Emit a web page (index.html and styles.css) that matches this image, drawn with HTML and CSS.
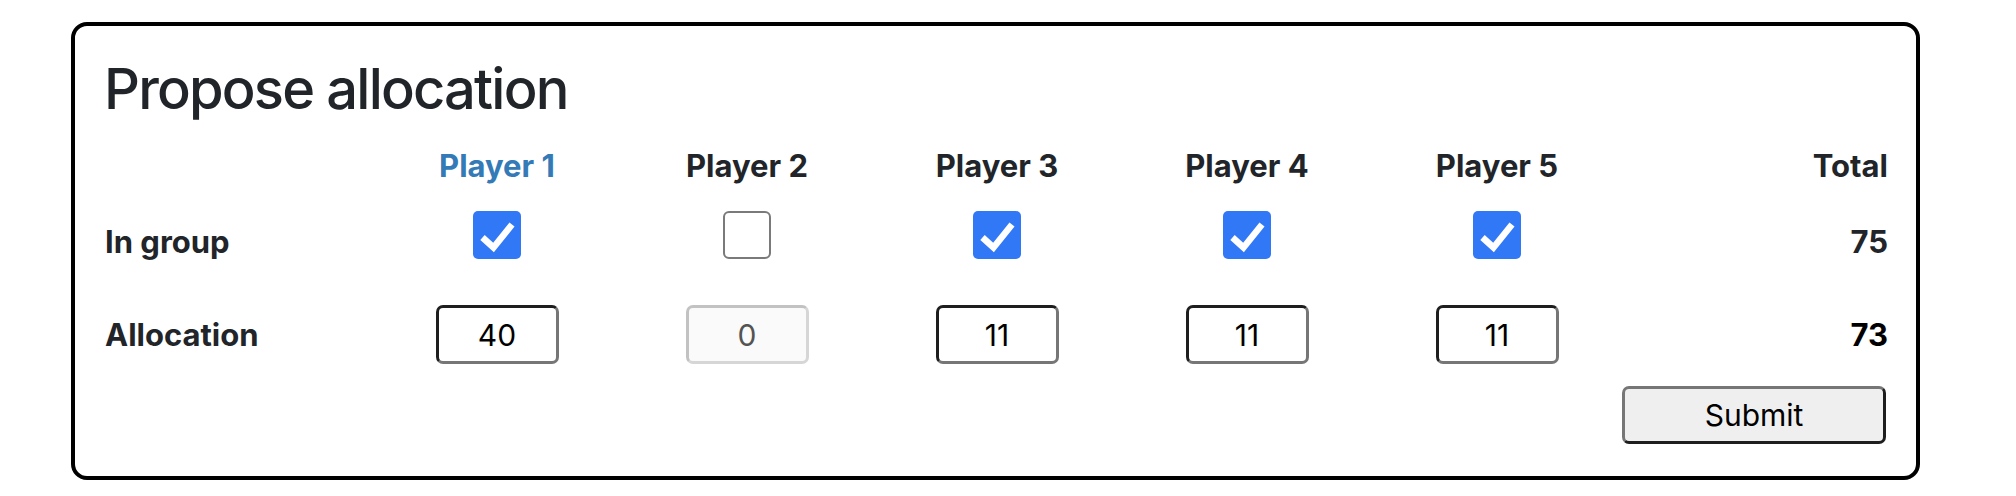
FILE: index.html
```html
<!DOCTYPE html>
<html lang="en">
<head>
<meta charset="utf-8">
<title>Propose allocation</title>
<link rel="stylesheet" href="styles.css">
</head>
<body>
<div class="card">
  <h1 class="title">Propose allocation</h1>

  <div class="grid row-head">
    <div class="label"></div>
    <div class="cell head active">Player 1</div>
    <div class="cell head">Player 2</div>
    <div class="cell head">Player 3</div>
    <div class="cell head">Player 4</div>
    <div class="cell head">Player 5</div>
    <div class="total">Total</div>
  </div>

  <div class="grid row-group">
    <div class="label">In group</div>
    <div class="cell"><span class="check on"><svg viewBox="0 0 48 48" width="48" height="48"><polyline points="9.5,26.5 20.5,36.5 39,13.5" fill="none" stroke="#fff" stroke-width="6.5"/></svg></span></div>
    <div class="cell"><span class="check off"></span></div>
    <div class="cell"><span class="check on"><svg viewBox="0 0 48 48" width="48" height="48"><polyline points="9.5,26.5 20.5,36.5 39,13.5" fill="none" stroke="#fff" stroke-width="6.5"/></svg></span></div>
    <div class="cell"><span class="check on"><svg viewBox="0 0 48 48" width="48" height="48"><polyline points="9.5,26.5 20.5,36.5 39,13.5" fill="none" stroke="#fff" stroke-width="6.5"/></svg></span></div>
    <div class="cell"><span class="check on"><svg viewBox="0 0 48 48" width="48" height="48"><polyline points="9.5,26.5 20.5,36.5 39,13.5" fill="none" stroke="#fff" stroke-width="6.5"/></svg></span></div>
    <div class="total">75</div>
  </div>

  <div class="grid row-alloc">
    <div class="label">Allocation</div>
    <div class="cell"><input class="amount" type="text" value="40"></div>
    <div class="cell"><input class="amount" type="text" value="0" disabled></div>
    <div class="cell"><input class="amount" type="text" value="11"></div>
    <div class="cell"><input class="amount" type="text" value="11"></div>
    <div class="cell"><input class="amount" type="text" value="11"></div>
    <div class="total strong">73</div>
  </div>

  <div class="grid row-submit">
    <div class="spacer"></div>
    <button class="submit" type="button">Submit</button>
  </div>
</div>
</body>
</html>
```

FILE: styles.css
```css
* { box-sizing: border-box; }

body {
  margin: 0;
  background: #fff;
  font-family: Inter, "Noto Sans", sans-serif;
  color: #212529;
}

.card {
  margin: 22px 0 0 71px;
  width: 1849px;
  border: 4px solid #000;
  border-radius: 16px;
  padding: 30px 30px 32px 30px;
}

.title {
  margin: 0 0 0 -1px;
  font-size: 56px;
  line-height: 66px;
  font-weight: 500;
  letter-spacing: -1.8px;
  color: #212529;
}

.grid {
  display: grid;
  grid-template-columns: 1fr repeat(5, 250px) 264px;
  align-items: center;
}

.row-head { height: 44px; margin-top: 22px; }
.row-group { height: 48px; margin-top: 21px; }
.row-alloc { height: 59px; margin-top: 48px; }
.row-submit { height: 58px; margin-top: 22px; grid-template-columns: 1fr 264px; }

.label {
  font-size: 31px;
  font-weight: 700;
  line-height: 38px;
}

.row-group .label,
.row-group .total {
  margin-top: 14px;
}

.cell {
  display: flex;
  justify-content: center;
  align-items: center;
}

.head {
  font-size: 31px;
  font-weight: 700;
  line-height: 38px;
}

.head.active { color: #337ab7; }

.total {
  text-align: right;
  font-size: 31px;
  font-weight: 700;
  line-height: 38px;
  margin-right: -2px;
}

.total.strong { color: #000; }

.check {
  display: block;
  width: 48px;
  height: 48px;
  border-radius: 5px;
}

.check svg { display: block; }

.check.on { background: #3178f6; }

.check.off {
  background: #fff;
  border: 2px solid #7a7a7a;
  border-radius: 6px;
}

.amount {
  display: block;
  width: 123px;
  height: 59px;
  margin: 0;
  padding: 0;
  border: 3px solid;
  border-color: #1e1e1e #767676 #767676 #1e1e1e;
  border-radius: 7px;
  background: #fff;
  font-family: Inter, "Noto Sans", sans-serif;
  font-size: 30px;
  color: #000;
  text-align: center;
  outline: none;
}

.amount:disabled {
  background: #fafafa;
  border-color: #c2c2c2 #d6d6d6 #d6d6d6 #c2c2c2;
  color: #545454;
}

.submit {
  display: block;
  width: 264px;
  height: 58px;
  margin: 0;
  padding: 0;
  border: 3px solid;
  border-color: #767676 #1e1e1e #1e1e1e #767676;
  border-radius: 7px;
  background: #efefef;
  font-family: Inter, "Noto Sans", sans-serif;
  font-size: 30px;
  color: #000;
}
```
